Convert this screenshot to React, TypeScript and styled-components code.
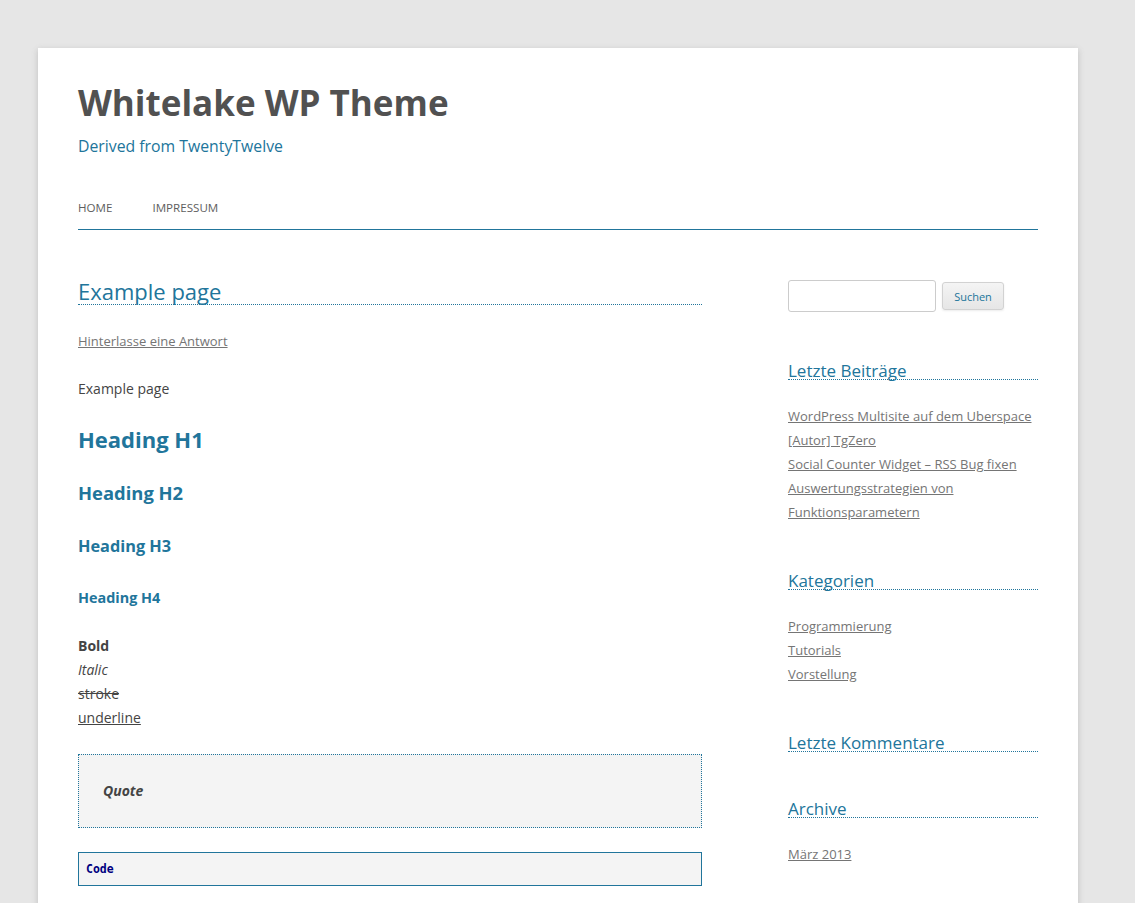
import React from 'react';
import styled, { createGlobalStyle } from 'styled-components';

const GlobalStyle = createGlobalStyle`
	body {
		margin: 0;
		background: #e6e6e6;
		font-family: 'Open Sans', 'Noto Sans', Arial, sans-serif;
		color: #444;
	}
`;

const blue = '#21759b';

const Page = styled.div`
	margin: 48px 0 0 38px;
	width: 960px;
	min-height: 900px;
	padding: 0 40px 24px;
	background: #fff;
	box-shadow: 0 2px 6px rgba(100, 100, 100, 0.3);
`;

const Header = styled.header`
	padding-top: 31px;
`;

const SiteTitle = styled.h1`
	margin: 0;
	font-size: 35px;
	line-height: 48px;
	font-weight: 700;
	color: #515151;
`;

const Tagline = styled.h2`
	margin: 7px 0 0;
	font-size: 15.8px;
	line-height: 24px;
	font-weight: 400;
	color: ${blue};
`;

const Nav = styled.nav`
	margin-top: 27px;
	border-bottom: 1px solid ${blue};
`;

const NavList = styled.ul`
	display: flex;
	gap: 40px;
	margin: 0;
	padding: 0;
	list-style: none;
`;

const NavItem = styled.li`
	padding: 11px 0 9px;
	font-size: 11.6px;
	line-height: 24px;
	text-transform: uppercase;
	color: #5e5e5e;
`;

const ContentRow = styled.div`
	display: flex;
	justify-content: space-between;
	align-items: flex-start;
	margin-top: 50px;
`;

const Main = styled.main`
	width: 624px;
`;

const EntryTitle = styled.h1`
	margin: 0;
	padding-bottom: 2px;
	font-size: 22px;
	line-height: 22px;
	font-weight: 400;
	color: ${blue};
	border-bottom: 1px dotted ${blue};
`;

const MetaLink = styled.a`
	display: block;
	margin-top: 24px;
	font-size: 13px;
	line-height: 24px;
	color: #757575;
	text-decoration: underline;
`;

const Para = styled.p<{ $gap?: number }>`
	margin: ${(p) => p.$gap ?? 24}px 0 0;
	font-size: 14px;
	line-height: 24px;
	color: #444;
`;

// font size, line height, top margin
const headingSizes: Record<number, [number, number, number]> = {
	1: [22, 30, 23],
	2: [18.4, 29, 24],
	3: [16.3, 29, 25],
	4: [14.4, 26, 24]
};

const Heading = styled.h2<{ $level: number }>`
	margin: ${(p) => headingSizes[p.$level][2]}px 0 0;
	font-size: ${(p) => headingSizes[p.$level][0]}px;
	line-height: ${(p) => headingSizes[p.$level][1]}px;
	font-weight: 700;
	color: ${blue};
`;

const Strike = styled.span`
	text-decoration: line-through;
`;

const Under = styled.span`
	text-decoration: underline;
`;

const Quote = styled.blockquote`
	margin: 24px 0 0;
	padding: 24px;
	background: #f4f4f4;
	border: 1px dotted ${blue};
`;

const QuoteText = styled.p`
	margin: 0;
	font-size: 14px;
	line-height: 24px;
	font-weight: 700;
	font-style: italic;
	color: #444;
`;

const Code = styled.pre`
	margin: 24px 0;
	padding: 7px 7px;
	background: #f4f4f4;
	border: 1px solid ${blue};
	font-family: 'DejaVu Sans Mono', 'Liberation Mono', monospace;
	font-size: 11.5px;
	line-height: 18px;
	font-weight: 700;
	color: #000080;
`;

const Sidebar = styled.aside`
	width: 250px;
`;

const SearchForm = styled.form`
	display: flex;
	align-items: flex-start;
	gap: 6px;
	margin-bottom: 50px;
`;

const SearchInput = styled.input`
	box-sizing: border-box;
	width: 148px;
	height: 32px;
	border: 1px solid #ccc;
	border-radius: 3px;
	background: #fff;
`;

const SearchButton = styled.button`
	box-sizing: border-box;
	width: 62px;
	height: 28px;
	margin-top: 2px;
	border: 1px solid #d2d2d2;
	border-radius: 3px;
	background: linear-gradient(#f4f4f4, #e6e6e6);
	box-shadow: 0 1px 2px rgba(64, 64, 64, 0.1);
	font-family: 'Open Sans', sans-serif;
	font-size: 11px;
	color: ${blue};
	padding: 0;
`;

const Widget = styled.section`
	margin-bottom: 48px;
`;

const WidgetTitle = styled.h3`
	margin: 0;
	font-size: 17px;
	line-height: 17px;
	font-weight: 400;
	color: ${blue};
	border-bottom: 1px dotted ${blue};
`;

const WidgetList = styled.ul`
	margin: 24px 0 0;
	padding: 0;
	list-style: none;
`;

const WidgetItem = styled.li`
	font-size: 13px;
	line-height: 24px;
	a {
		color: #757575;
		text-decoration: underline;
	}
`;

const widgets: { title: string; items: string[] }[] = [
	{
		title: 'Letzte Beiträge',
		items: ['WordPress Multisite auf dem Uberspace', '[Autor] TgZero', 'Social Counter Widget – RSS Bug fixen', 'Auswertungsstrategien von Funktionsparametern']
	},
	{ title: 'Kategorien', items: ['Programmierung', 'Tutorials', 'Vorstellung'] },
	{ title: 'Letzte Kommentare', items: [] },
	{ title: 'Archive', items: ['März 2013'] }
];

export default function App() {
	return (
		<>
			<GlobalStyle />
			<Page>
				<Header>
					<SiteTitle>Whitelake WP Theme</SiteTitle>
					<Tagline>Derived from TwentyTwelve</Tagline>
					<Nav>
						<NavList>
							<NavItem>Home</NavItem>
							<NavItem>Impressum</NavItem>
						</NavList>
					</Nav>
				</Header>
				<ContentRow>
					<Main>
						<EntryTitle>Example page</EntryTitle>
						<MetaLink href='#'>Hinterlasse eine Antwort</MetaLink>
						<Para>Example page</Para>
						<Heading as='h1' $level={1}>Heading H1</Heading>
						<Heading as='h2' $level={2}>Heading H2</Heading>
						<Heading as='h3' $level={3}>Heading H3</Heading>
						<Heading as='h4' $level={4}>Heading H4</Heading>
						<Para $gap={23}>
							<strong>Bold</strong>
							<br />
							<em>Italic</em>
							<br />
							<Strike>stroke</Strike>
							<br />
							<Under>underline</Under>
						</Para>
						<Quote>
							<QuoteText>Quote</QuoteText>
						</Quote>
						<Code>Code</Code>
					</Main>
					<Sidebar>
						<SearchForm onSubmit={(e) => e.preventDefault()}>
							<SearchInput type='text' />
							<SearchButton type='submit'>Suchen</SearchButton>
						</SearchForm>
						{widgets.map((w) => (
							<Widget key={w.title}>
								<WidgetTitle>{w.title}</WidgetTitle>
								{w.items.length > 0 && (
									<WidgetList>
										{w.items.map((item) => (
											<WidgetItem key={item}>
												<a href='#'>{item}</a>
											</WidgetItem>
										))}
									</WidgetList>
								)}
							</Widget>
						))}
					</Sidebar>
				</ContentRow>
			</Page>
		</>
	);
}
